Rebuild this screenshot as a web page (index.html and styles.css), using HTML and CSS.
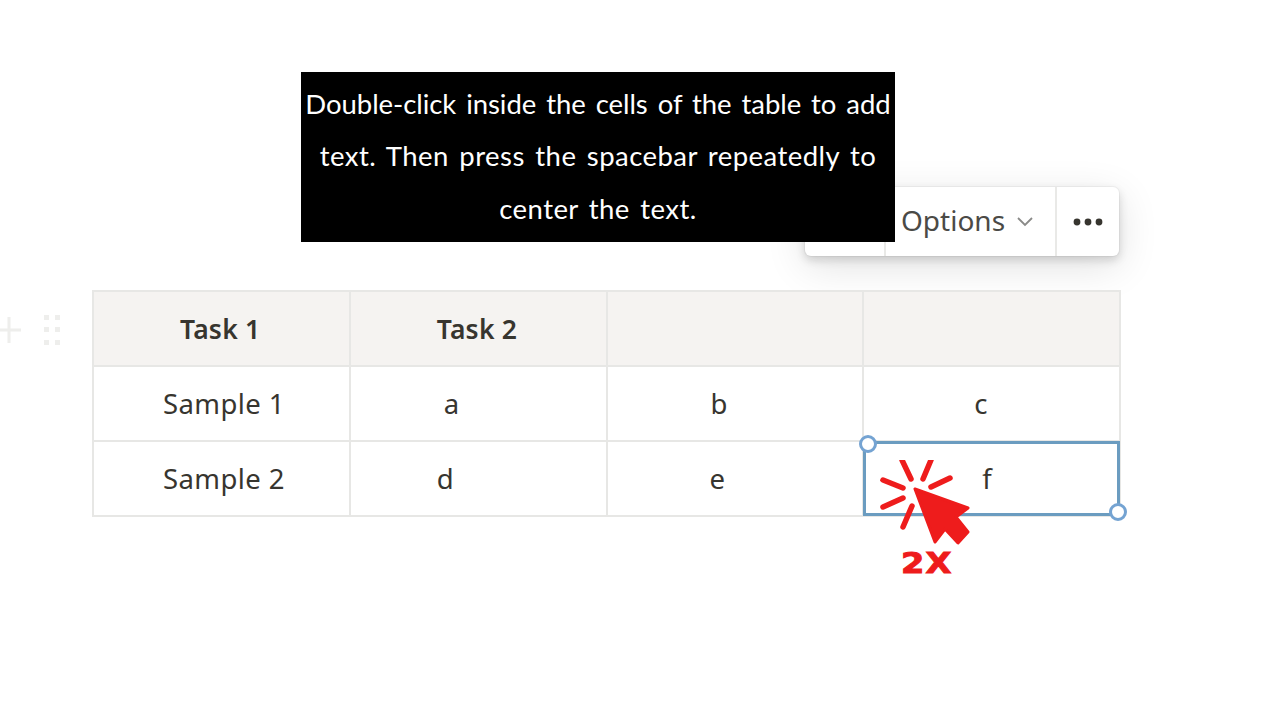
FILE: index.html
```html
<!DOCTYPE html>
<html lang="en">
<head>
<meta charset="utf-8">
<title>Table tutorial</title>
<link rel="stylesheet" href="styles.css">
</head>
<body>
<main class="page">
  <div class="toolbar">
    <div class="tool tool-blank"></div>
    <div class="tool tool-options"><span>Options</span>
      <svg class="chevron" width="18" height="12" viewBox="0 0 18 12"><path d="M2 2l7 7 7-7" fill="none" stroke="#8a8a88" stroke-width="1.8"/></svg>
    </div>
    <div class="tool tool-more">
      <svg width="32" height="10" viewBox="0 0 32 10"><circle cx="5" cy="5" r="3.4" fill="#37352f"/><circle cx="16" cy="5" r="3.4" fill="#37352f"/><circle cx="27" cy="5" r="3.4" fill="#37352f"/></svg>
    </div>
  </div>

  <div class="caption"><span class="line-first">Double-click inside the cells of the table to add</span><br><span class="line-wide">text. Then press the spacebar repeatedly to</span><br><span class="line-wide">center the text.</span></div>

  <div class="block">
    <div class="handles">
      <svg width="64" height="36" viewBox="0 0 64 36">
        <path d="M9 5v26M-4 18h25" stroke="#eeeeec" stroke-width="3" fill="none"/>
        <g fill="#eeeeec"><rect x="44" y="3" width="5" height="5"/><rect x="55" y="3" width="5" height="5"/><rect x="44" y="15" width="5" height="5"/><rect x="55" y="15" width="5" height="5"/><rect x="44" y="28" width="5" height="5"/><rect x="55" y="28" width="5" height="5"/></g>
      </svg>
    </div>
    <table class="grid">
      <tr class="head">
        <th class="p87">Task 1</th><th class="p87">Task 2</th><th></th><th></th>
      </tr>
      <tr>
        <td class="p70">Sample 1</td><td class="p94">a</td><td class="p105">b</td><td class="p112">c</td>
      </tr>
      <tr>
        <td class="p70">Sample 2</td><td class="p87">d</td><td class="p104">e</td><td class="p119 selected">f
          <span class="handle handle-tl"></span><span class="handle handle-br"></span>
        </td>
      </tr>
    </table>
  </div>

  <svg class="click" width="110" height="100" viewBox="0 0 110 100">
    <path d="M35 29 L88 48 L76 57 L88 72 L78 83 L65 69 L55 82 Z" fill="#ee1c1c" stroke="#ee1c1c" stroke-width="3" stroke-linejoin="round"/>
    <g stroke="#ee1c1c" stroke-width="5.5" stroke-linecap="round" fill="none">
      <path d="M22 0L31 19"/><path d="M51 0L43 19"/><path d="M70 18L51 27"/><path d="M3 20L23 28"/><path d="M3 47L23 38"/><path d="M32 46L23 67"/>
    </g>
  </svg>
  <div class="twox">2X</div>
</main>
</body>
</html>
```

FILE: styles.css
```css
* { box-sizing: border-box; }
html, body { margin: 0; background: #fff; }
.page {
  position: relative;
  width: 1280px;
  height: 720px;
  overflow: hidden;
  padding: 290px 0 0 92px;
  font-family: "Noto Sans", "Open Sans", sans-serif;
  color: #37352f;
}
.block { position: relative; }
.handles { position: absolute; left: -92px; top: 22px; line-height: 0; }
.grid {
  border-collapse: collapse;
  table-layout: fixed;
  width: 1027px;
  height: 225px;
  font-size: 27.5px;
  line-height: 36px;
  letter-spacing: .4px;
}
.grid th, .grid td {
  width: 256.75px;
  height: 75px;
  border: 2px solid #e7e7e5;
  text-align: left;
  padding: 0;
  white-space: nowrap;
  font-weight: 400;
  position: relative;
}
.grid th { background: #f5f3f1; font-weight: 600; font-size: 26.5px; letter-spacing: .2px; }
.p70 { padding-left: 69px !important; }
.p87 { padding-left: 86px !important; }
.p94 { padding-left: 93px !important; }
.p104 { padding-left: 102px !important; }
.p105 { padding-left: 103px !important; }
.p112 { padding-left: 110px !important; }
.p119 { padding-left: 118px !important; }
.selected { outline: 3px solid #6b9cc0; outline-offset: -3px; }
.handle {
  position: absolute;
  width: 18px;
  height: 18px;
  border: 3px solid #74a3d2;
  border-radius: 50%;
  background: #fff;
}
.handle-tl { left: -5px; top: -7px; }
.handle-br { right: -8px; bottom: -6px; }
.toolbar {
  position: absolute;
  left: 805px;
  top: 187px;
  width: 314px;
  height: 69px;
  display: flex;
  background: #fff;
  border-radius: 6px;
  box-shadow: 0 0 0 1px rgba(15,15,15,.04), 0 4px 10px rgba(15,15,15,.16), 0 10px 40px rgba(15,15,15,.12);
}
.tool { height: 100%; display: flex; align-items: center; border-right: 2px solid #e9e9e7; }
.tool-blank { width: 81px; }
.tool-options { width: 171px; padding: 0 0 4px 15px; gap: 11px; font-size: 28px; color: #4b4a46; }
.chevron { margin-top: 4px; }
.tool-more { flex: 1; border-right: 0; justify-content: center; padding: 1px 1px 0 0; }
.caption {
  position: absolute;
  left: 301px;
  top: 72px;
  width: 594px;
  height: 170px;
  background: #000;
  color: #fff;
  font-family: "Lato", sans-serif;
  font-size: 27.5px;
  line-height: 52.3px;
  word-spacing: 3px;
  text-align: center;
  white-space: nowrap;
  padding-top: 6px;
}
.line-first { letter-spacing: -.06px; }
.line-wide { letter-spacing: .45px; }
.click { position: absolute; left: 880px; top: 460px; }
.twox {
  position: absolute;
  left: 901px;
  top: 547px;
  color: #ee1c1c;
  font-family: "DejaVu Sans", sans-serif;
  font-weight: 700;
  font-size: 28px;
  line-height: 34px;
  letter-spacing: 1px;
  -webkit-text-stroke: 1px #ee1c1c;
  transform: scaleX(1.2);
  transform-origin: left center;
}
```
